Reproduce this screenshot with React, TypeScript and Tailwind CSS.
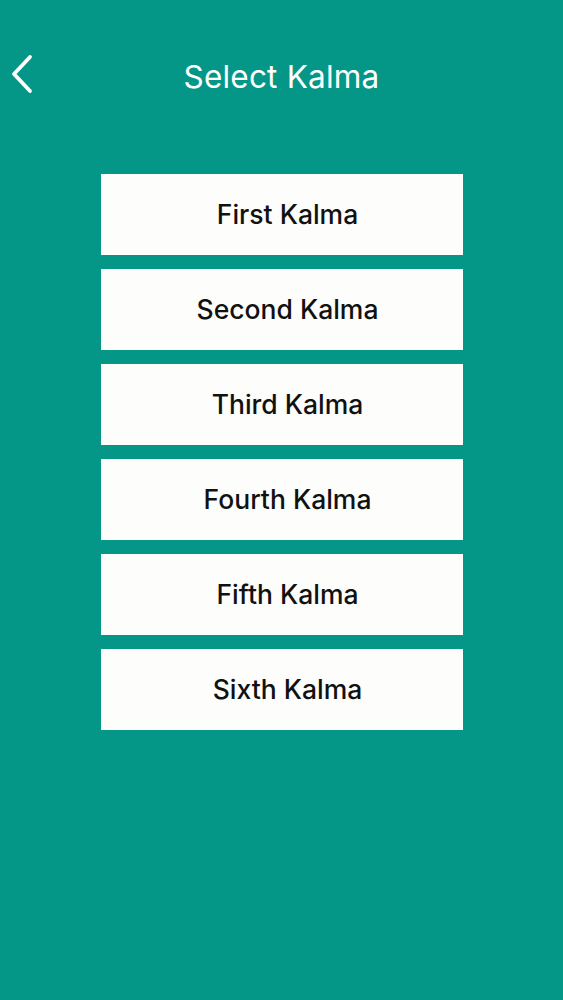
const kalmas = ['First Kalma', 'Second Kalma', 'Third Kalma', 'Fourth Kalma', 'Fifth Kalma', 'Sixth Kalma']

export default function App() {
  return (
    <div
      className="w-[563px] h-[1000px] bg-[#049687] flex flex-col"
      style={{ fontFamily: 'Inter, "Noto Sans", sans-serif' }}
    >
      <div className="relative h-[155px] flex justify-center pt-[56px]">
        <button className="absolute left-[9px] top-[54px] w-[26px] h-[40px] text-white">
          <svg viewBox="0 0 26 40" className="w-full h-full" fill="none" stroke="currentColor" strokeWidth="3.8" strokeLinecap="round" strokeLinejoin="round">
            <path d="M21 3 L5 20 L21 37" />
          </svg>
        </button>
        <h1 className="text-[31.5px] leading-[42px] font-normal text-white tracking-[0.2px]">Select Kalma</h1>
      </div>
      <div className="flex flex-col items-center gap-[14px] pt-[19px]">
        {kalmas.map((k) => (
          <button
            key={k}
            className="w-[362px] h-[81px] bg-[#fdfdfb] flex items-center justify-center pl-[12px] text-[26.5px] font-medium text-[#111]"
          >
            {k}
          </button>
        ))}
      </div>
    </div>
  )
}
